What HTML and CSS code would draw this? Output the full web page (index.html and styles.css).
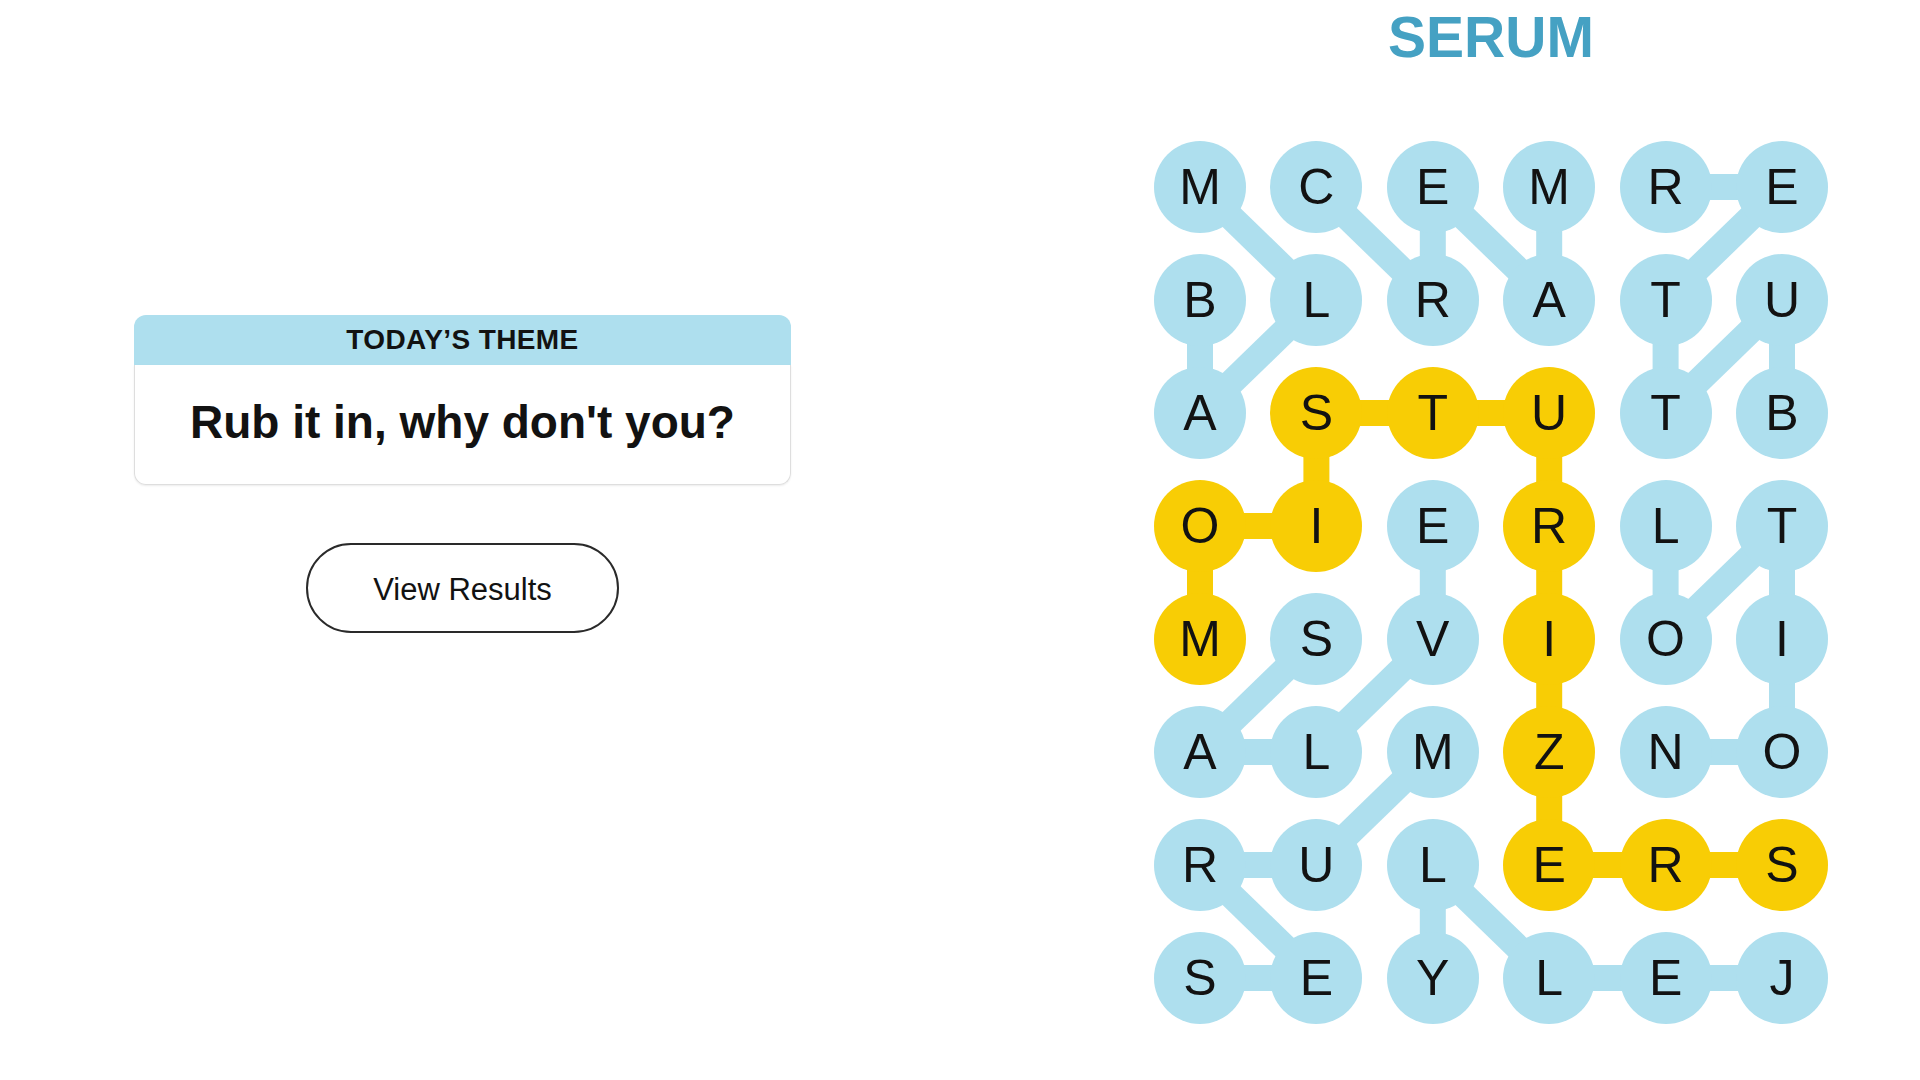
FILE: index.html
```html
<!DOCTYPE html>
<html lang="en">
<head>
  <meta charset="UTF-8" />
  <meta name="viewport" content="width=device-width, initial-scale=1.0"/>
  <title>Strands</title>
  <link rel="stylesheet" href="styles.css">
</head>
<body>

<main class="game">
  <section class="sidebar">
    <div class="theme-card">
      <div class="theme-header">TODAY’S THEME</div>
      <div class="theme-body">Rub it in, why don't you?</div>
    </div>
    <button class="results-btn">View Results</button>
  </section>

  <section class="board-area">
    <h1 class="current-word">SERUM</h1>
    <div class="board-wrap">
      <svg class="links" id="links" width="674" height="883" viewBox="0 0 674 883"></svg>
      <div class="board" id="board">
        <!-- letters are inserted here -->
      </div>
    </div>
  </section>
</main>

<script>
  const rows = ['MCEMRE', 'BLRATU', 'ASTUTB', 'OIERLT', 'MSVIOI', 'ALMZNO', 'RULERS', 'SEYLEJ'];

  // found words as [row, col] paths
  const words = [
    { path: [[1,0],[2,0],[1,1],[0,0]] },                 // BALM
    { path: [[0,1],[1,2],[0,2],[1,3],[0,3]] },           // CREAM
    { path: [[2,5],[1,5],[2,4],[1,4],[0,5],[0,4]] },     // BUTTER
    { path: [[4,1],[5,0],[5,1],[4,2],[3,2]] },           // SALVE
    { path: [[3,4],[4,4],[3,5],[4,5],[5,5],[5,4]] },     // LOTION
    { path: [[7,0],[7,1],[6,0],[6,1],[5,2]] },           // SERUM
    { path: [[7,5],[7,4],[7,3],[6,2],[7,2]] },           // JELLY
    { path: [[4,0],[3,0],[3,1],[2,1],[2,2],[2,3],[3,3],[4,3],[5,3],[6,3],[6,4],[6,5]], spangram: true } // MOISTURIZERS
  ];

  const board = document.getElementById('board');
  const links = document.getElementById('links');
  const size = 92, colStep = 116.4, rowStep = 113;

  const spanCells = new Set();
  words.filter(w => w.spangram).forEach(w => w.path.forEach(([r, c]) => spanCells.add(r + '-' + c)));

  rows.forEach((row, r) => {
    [...row].forEach((letter, c) => {
      const cell = document.createElement('div');
      cell.className = 'letter' + (spanCells.has(r + '-' + c) ? ' spangram' : '');
      cell.textContent = letter;
      board.appendChild(cell);
    });
  });

  const center = ([r, c]) => [size / 2 + c * colStep, size / 2 + r * rowStep];

  words.forEach(word => {
    for (let i = 1; i < word.path.length; i++) {
      const [x1, y1] = center(word.path[i - 1]);
      const [x2, y2] = center(word.path[i]);
      const line = document.createElementNS('http://www.w3.org/2000/svg', 'line');
      line.setAttribute('x1', x1);
      line.setAttribute('y1', y1);
      line.setAttribute('x2', x2);
      line.setAttribute('y2', y2);
      line.setAttribute('class', word.spangram ? 'link spangram' : 'link');
      links.appendChild(line);
    }
  });
</script>

</body>
</html>
```

FILE: styles.css
```css
body {
  margin: 0;
  background: #ffffff;
  font-family: "Liberation Sans", Arial, sans-serif;
  color: #121212;
}

.game {
  display: flex;
  min-height: 1080px;
}

/* left column */
.sidebar {
  width: 925px;
  padding-top: 315px;
  display: flex;
  flex-direction: column;
  align-items: center;
}

.theme-card {
  width: 657px;
}

.theme-header {
  height: 50px;
  line-height: 50px;
  background: #aedfee;
  border-radius: 12px 12px 0 0;
  text-align: center;
  font-size: 28px;
  font-weight: bold;
  letter-spacing: 0.4px;
}

.theme-body {
  box-sizing: border-box;
  height: 120px;
  padding-top: 31px;
  border: 1px solid #dedede;
  border-top: none;
  border-radius: 0 0 12px 12px;
  box-shadow: 0 1px 2px rgba(0, 0, 0, 0.08);
  text-align: center;
  font-size: 46px;
  line-height: 52px;
  font-weight: bold;
}

.results-btn {
  margin-top: 58px;
  width: 313px;
  height: 90px;
  padding-top: 5px;
  background: #fff;
  border: 2px solid #2a2a2a;
  border-radius: 45px;
  font-family: inherit;
  font-size: 31px;
  color: #121212;
  cursor: pointer;
}

/* board */
.board-area {
  flex: 1;
  margin-left: 137px;
  display: flex;
  flex-direction: column;
  align-items: center;
}

.current-word {
  margin: 5px 0 72px;
  font-size: 57px;
  line-height: 64px;
  font-weight: bold;
  color: #45a1c3;
}

.board-wrap {
  position: relative;
  width: 674px;
  height: 883px;
}

.links {
  position: absolute;
  top: 0;
  left: 0;
}

.link {
  stroke: #aedfee;
  stroke-width: 26;
}

.link.spangram {
  stroke: #f8cd05;
}

.board {
  position: relative;
  display: grid;
  grid-template-columns: repeat(6, 92px);
  grid-auto-rows: 92px;
  column-gap: 24.4px;
  row-gap: 21px;
}

.letter {
  width: 92px;
  height: 92px;
  border-radius: 50%;
  background: #aedfee;
  display: flex;
  align-items: center;
  justify-content: center;
  font-size: 50px;
  color: #121212;
}

.letter.spangram {
  background: #f8cd05;
}
```
